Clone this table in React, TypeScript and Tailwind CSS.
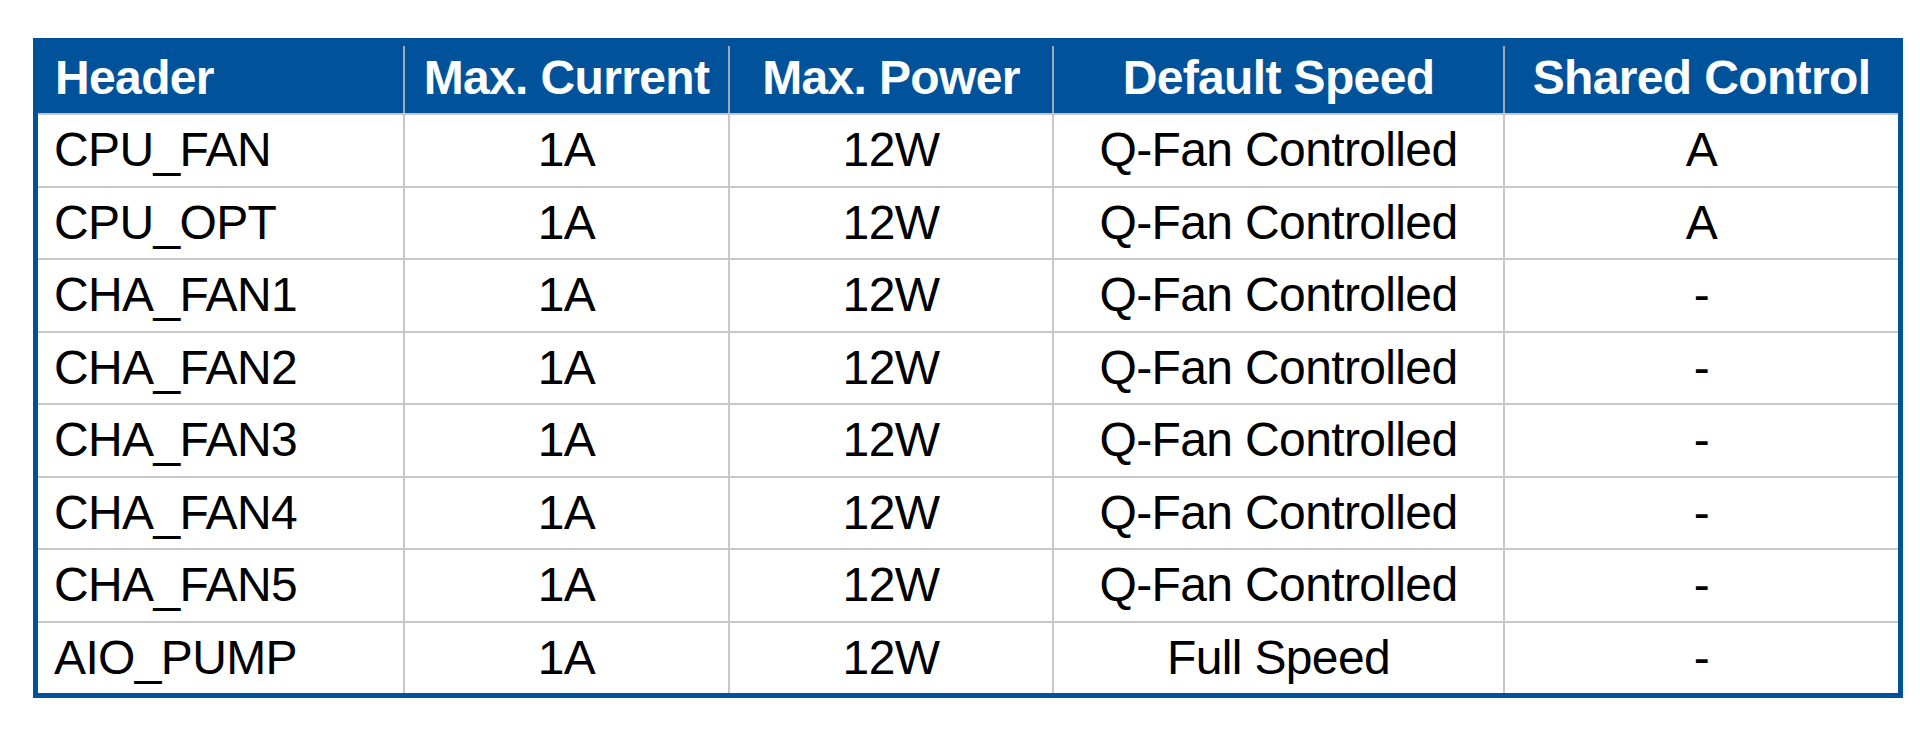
const columns = ["Header", "Max. Current", "Max. Power", "Default Speed", "Shared Control"];

const rows = [
  ["CPU_FAN", "1A", "12W", "Q-Fan Controlled", "A"],
  ["CPU_OPT", "1A", "12W", "Q-Fan Controlled", "A"],
  ["CHA_FAN1", "1A", "12W", "Q-Fan Controlled", "-"],
  ["CHA_FAN2", "1A", "12W", "Q-Fan Controlled", "-"],
  ["CHA_FAN3", "1A", "12W", "Q-Fan Controlled", "-"],
  ["CHA_FAN4", "1A", "12W", "Q-Fan Controlled", "-"],
  ["CHA_FAN5", "1A", "12W", "Q-Fan Controlled", "-"],
  ["AIO_PUMP", "1A", "12W", "Full Speed", "-"],
];

const grid = "grid grid-cols-[365px_325px_324px_451px_395px]";

export default function App() {
  return (
    <div className="min-h-screen bg-white pt-[38px] pl-[33px] font-['Liberation_Sans',Arial,sans-serif] tracking-[-0.04em]">
      <div className="w-[1870px] border-[5px] border-[#00529b]">
        {/* Header row */}
        <div className={`${grid} h-[70px] bg-[#00529b] text-white font-bold text-[48px] leading-none`}>
          {columns.map((col, i) => (
            <div
              key={col}
              className={
                i === 0
                  ? "flex items-center pl-[17px]"
                  : "flex items-center justify-center border-l-2 border-[#9fa9b6] mt-[3px]"
              }
            >
              <span className={i === 0 ? "" : "-mt-[3px]"}>{col}</span>
            </div>
          ))}
        </div>

        {/* Body rows */}
        {rows.map((row) => (
          <div
            key={row[0]}
            className={`${grid} h-[72.5px] border-t-2 border-[#c8c8c8] text-[48px] leading-none text-black`}
          >
            {row.map((cell, i) => (
              <div
                key={i}
                className={
                  i === 0
                    ? "flex items-center pl-[16px]"
                    : "flex items-center justify-center border-l-2 border-[#c8c8c8]"
                }
              >
                {cell}
              </div>
            ))}
          </div>
        ))}
      </div>
    </div>
  );
}
